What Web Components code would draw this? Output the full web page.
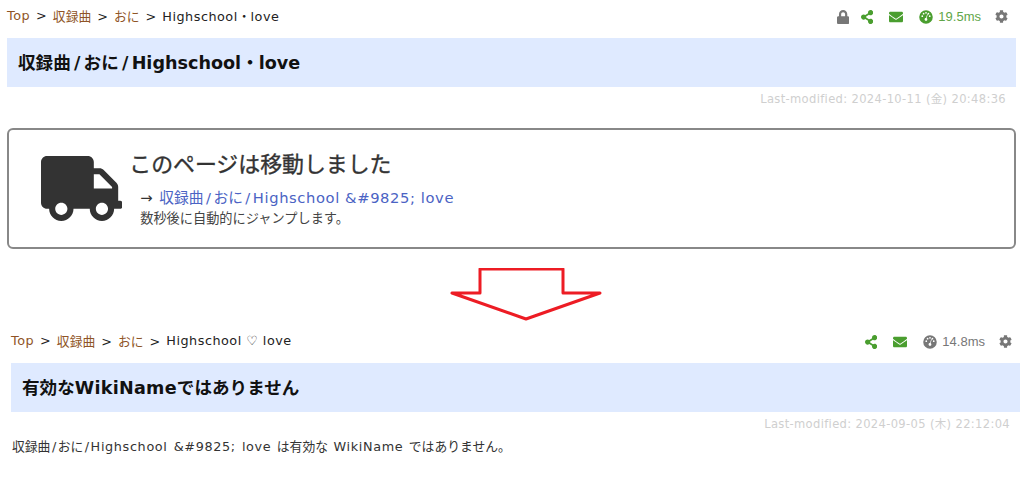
<!DOCTYPE html>
<html lang="ja">
<head>
<meta charset="utf-8">
<title>Highschool love</title>
<style>
  html, body { margin: 0; background: #fff; }
  body {
    height: 482px;
    overflow: hidden;
    font-family: "DejaVu Sans", "Noto Sans CJK JP", sans-serif;
    font-size: 12.8px;
    color: #222;
  }
  .first { margin-left: 7px; }
  .second { margin-left: 11px; }
  .ms { font-family: "Liberation Sans", sans-serif; font-size: 13px; margin: 0 14px 0 5px; }
  /* latin runs are set a little wider than the japanese around them */
  .l { letter-spacing: .5px; }
  .l-m { letter-spacing: .6px; }
  .l-b { letter-spacing: .65px; }
  .l-h { letter-spacing: .25px; }
  .sl { margin: 0 3.2px; }
  .sl-m { margin: 0 2.5px; }
  .sl-s { margin: 0 1.5px; }
</style>
</head>
<body>
<wiki-page class="first">
  <wiki-topbar slot="top">
    <wiki-crumb href><span class="l">Top</span></wiki-crumb>
    <wiki-crumb href>収録曲</wiki-crumb>
    <wiki-crumb href>おに</wiki-crumb>
    <wiki-crumb><span class="l">Highschool</span>・<span class="l">love</span></wiki-crumb>
    <fa-icon slot="tools" name="lock" color="#777" style="margin-right:12px"></fa-icon>
    <fa-icon slot="tools" name="share" color="#4a9e2f" style="margin-right:16px"></fa-icon>
    <fa-icon slot="tools" name="envelope" color="#4a9e2f" style="margin-right:16px"></fa-icon>
    <fa-icon slot="tools" name="gauge" color="#4a9e2f"></fa-icon>
    <span slot="tools" class="ms" style="color:#5fa648">19.5ms</span>
    <fa-icon slot="tools" name="cog" size="13" color="#777"></fa-icon>
  </wiki-topbar>
  <wiki-title>収録曲<span class="sl">/</span>おに<span class="sl">/</span>Highschool・love</wiki-title>
  <wiki-modified>Last-modified: 2024-10-11 (金) 20:48:36</wiki-modified>
  <redirect-notice>
    <span slot="heading">このページは移動しました</span>
    <span slot="target">収録曲<span class="sl-m">/</span>おに<span class="sl-m">/</span><span class="l-m">Highschool &amp;#9825; love</span></span>
    <span slot="note">数秒後に自動的にジャンプします。</span>
  </redirect-notice>
</wiki-page>
<down-arrow></down-arrow>
<wiki-page class="second">
  <wiki-topbar slot="top">
    <wiki-crumb href><span class="l">Top</span></wiki-crumb>
    <wiki-crumb href>収録曲</wiki-crumb>
    <wiki-crumb href>おに</wiki-crumb>
    <wiki-crumb><span class="l">Highschool ♡ love</span></wiki-crumb>
    <fa-icon slot="tools" name="share" color="#4a9e2f" style="margin-right:16px"></fa-icon>
    <fa-icon slot="tools" name="envelope" color="#4a9e2f" style="margin-right:16px"></fa-icon>
    <fa-icon slot="tools" name="gauge" color="#777"></fa-icon>
    <span slot="tools" class="ms" style="color:#777">14.8ms</span>
    <fa-icon slot="tools" name="cog" size="13" color="#777"></fa-icon>
  </wiki-topbar>
  <wiki-title>有効な<span class="l-h">WikiName</span>ではありません</wiki-title>
  <wiki-modified>Last-modified: 2024-09-05 (木) 22:12:04</wiki-modified>
  <wiki-body>収録曲<span class="sl-s">/</span>おに<span class="sl-s">/</span><span class="l-b">Highschool &amp;#9825; love</span> は有効な <span class="l-b">WikiName</span> ではありません。</wiki-body>
</wiki-page>

<script>
const ICONS = {
  lock: ['0 0 448 512', 'M400 224h-24v-72C376 68.2 307.8 0 224 0S72 68.2 72 152v72H48c-26.5 0-48 21.5-48 48v192c0 26.5 21.5 48 48 48h352c26.5 0 48-21.5 48-48V272c0-26.5-21.5-48-48-48zm-104 0H152v-72c0-39.7 32.3-72 72-72s72 32.3 72 72v72z'],
  share: ['0 0 448 512', 'M352 320c-22.608 0-43.387 7.819-59.79 20.895l-102.486-64.054a96.551 96.551 0 0 0 0-41.683l102.486-64.054C308.613 184.181 329.392 192 352 192c53.019 0 96-42.981 96-96S405.019 0 352 0s-96 42.981-96 96c0 7.158.79 14.13 2.276 20.841L155.79 180.895C139.387 167.819 118.608 160 96 160c-53.019 0-96 42.981-96 96s42.981 96 96 96c22.608 0 43.387-7.819 59.79-20.895l102.486 64.054A96.301 96.301 0 0 0 256 416c0 53.019 42.981 96 96 96s96-42.981 96-96-42.981-96-96-96z'],
  envelope: ['0 0 512 512', 'M502.3 190.8c3.9-3.1 9.7-.2 9.7 4.7V400c0 26.5-21.5 48-48 48H48c-26.5 0-48-21.5-48-48V195.6c0-5 5.7-7.8 9.7-4.7 22.4 17.4 52.1 39.5 154.1 113.6 21.1 15.4 56.7 47.8 92.2 47.6 35.7.3 72-32.8 92.3-47.6 102-74.1 131.6-96.3 154-113.7zM256 320c23.2.4 56.6-29.2 73.4-41.4 132.7-96.3 142.8-104.7 173.4-128.7 5.8-4.5 9.2-11.5 9.2-18.9v-19c0-26.5-21.5-48-48-48H48C21.5 64 0 85.5 0 112v19c0 7.4 3.4 14.3 9.2 18.9 30.6 23.9 40.7 32.4 173.4 128.7 16.8 12.2 50.2 41.8 73.4 41.4z'],
  gauge: ['0 0 512 512', 'M256 8a248 248 0 1 0 0 496 248 248 0 0 0 0-496zm0 64a32 32 0 1 1 0 64 32 32 0 0 1 0-64zM120 256a32 32 0 1 1 0-64 32 32 0 0 1 0 64zm48-88a32 32 0 1 1 0-64 32 32 0 0 1 0 64zm150 6l-38 122c18 12 28 32 26 54-2 18-10 32-22 42h-56c-16-12-26-32-24-54 2-30 24-52 54-56l38-122c4-12 16-18 28-14s18 16 14 28zm26-6a32 32 0 1 1 0-64 32 32 0 0 1 0 64zm48 88a32 32 0 1 1 0-64 32 32 0 0 1 0 64z'],
  cog: ['0 0 512 512', 'M487.4 315.7l-42.6-24.6c4.3-23.2 4.3-47 0-70.2l42.6-24.6c4.9-2.8 7.1-8.6 5.5-14-11.1-35.6-30-67.8-54.7-94.6-3.8-4.1-10-5.1-14.8-2.3L380.8 110c-17.9-15.4-38.5-27.3-60.8-35.1V25.8c0-5.6-3.9-10.5-9.4-11.7-36.7-8.2-74.3-7.8-109.2 0-5.5 1.2-9.4 6.1-9.4 11.7V75c-22.2 7.9-42.8 19.8-60.8 35.1L88.7 85.5c-4.9-2.8-11-1.9-14.8 2.3-24.7 26.7-43.6 58.9-54.7 94.6-1.7 5.4.6 11.2 5.5 14L67.3 221c-4.3 23.2-4.3 47 0 70.2l-42.6 24.6c-4.9 2.8-7.1 8.6-5.5 14 11.1 35.6 30 67.8 54.7 94.6 3.8 4.1 10 5.1 14.8 2.3l42.6-24.6c17.9 15.4 38.5 27.3 60.8 35.1v49.2c0 5.6 3.9 10.5 9.4 11.7 36.7 8.2 74.3 7.8 109.2 0 5.5-1.2 9.4-6.1 9.4-11.7v-49.2c22.2-7.9 42.8-19.8 60.8-35.1l42.6 24.6c4.9 2.8 11 1.9 14.8-2.3 24.7-26.7 43.6-58.9 54.7-94.6 1.5-5.5-.7-11.3-5.6-14.1zM256 336c-44.1 0-80-35.9-80-80s35.9-80 80-80 80 35.9 80 80-35.9 80-80 80z'],
  truck: ['0 0 640 512', 'M624 352h-16V243.9c0-12.7-5.1-24.9-14.1-33.9L494 110.1c-9-9-21.2-14.1-33.9-14.1H416V48c0-26.5-21.5-48-48-48H48C21.5 0 0 21.5 0 48v320c0 26.5 21.5 48 48 48h16c0 53 43 96 96 96s96-43 96-96h128c0 53 43 96 96 96s96-43 96-96h48c8.8 0 16-7.2 16-16v-32c0-8.8-7.2-16-16-16zM160 464c-26.5 0-48-21.5-48-48s21.5-48 48-48 48 21.5 48 48-21.5 48-48 48zm320 0c-26.5 0-48-21.5-48-48s21.5-48 48-48 48 21.5 48 48-21.5 48-48 48zm80-208H416V144h44.1l99.9 99.9V256z']
};

class FaIcon extends HTMLElement {
  connectedCallback() {
    const [box, d] = ICONS[this.getAttribute('name')];
    const w = box.split(' ')[2] / 512;
    const size = +this.getAttribute('size') || 14;
    this.attachShadow({ mode: 'open' }).innerHTML = `
      <style>
        :host { display: inline-flex; align-items: center; }
        svg { display: block; fill: ${this.getAttribute('color') || 'currentColor'}; }
      </style>
      <svg xmlns="http://www.w3.org/2000/svg" viewBox="${box}" width="${size * w}" height="${size}"><path fill-rule="evenodd" d="${d}"/></svg>`;
  }
}

class WikiPage extends HTMLElement {
  constructor() {
    super();
    this.attachShadow({ mode: 'open' }).innerHTML = `
      <style>:host { display: block; width: 1009px; }</style>
      <slot name="top"></slot><slot></slot>`;
  }
}

class WikiTopbar extends HTMLElement {
  constructor() {
    super();
    this.attachShadow({ mode: 'open' }).innerHTML = `
      <style>
        :host { display: flex; justify-content: space-between; align-items: center; height: 33px; padding-bottom: 5px; }
        .crumbs { display: flex; align-items: center; margin-bottom: 2px; }
        .tools { display: flex; align-items: center; padding-right: 8px; }
      </style>
      <div class="crumbs"><slot></slot></div>
      <div class="tools"><slot name="tools"></slot></div>`;
  }
}

class WikiCrumb extends HTMLElement {
  constructor() {
    super();
    this.attachShadow({ mode: 'open' }).innerHTML = `
      <style>
        :host { display: block; }
        :host([href]) { color: #8f5426; }
        :host([href])::after { content: '>'; color: #222; margin: 0 6px; }
      </style>
      <slot></slot>`;
  }
}

class WikiTitle extends HTMLElement {
  constructor() {
    super();
    this.attachShadow({ mode: 'open' }).innerHTML = `
      <style>
        :host { display: block; height: 48px; line-height: 48px; padding: 1px 0 0 11px; background: #dfeaff; color: #111; font-size: 17.6px; font-weight: bold; }
      </style>
      <slot></slot>`;
  }
}

class WikiModified extends HTMLElement {
  constructor() {
    super();
    this.attachShadow({ mode: 'open' }).innerHTML = `
      <style>
        :host { display: block; height: 22px; padding: 4px 10px 0 0; text-align: right; font-size: 11.52px; letter-spacing: .35px; line-height: 17px; color: #cfcfcf; }
      </style>
      <slot></slot>`;
  }
}

class RedirectNotice extends HTMLElement {
  constructor() {
    super();
    this.attachShadow({ mode: 'open' }).innerHTML = `
      <style>
        :host { display: flex; align-items: flex-start; margin-top: 15px; height: 121px; box-sizing: border-box; padding: 26px 0 0 32px; border: 2px solid #888; border-radius: 6px; }
        .text { margin-left: 7px; margin-top: -3px; }
        .heading { font-size: 21.9px; -webkit-text-stroke: .35px #333; line-height: 24px; color: #333; }
        .target { margin: 11px 0 0 11px; font-size: 14.72px; line-height: 20px; color: #333; }
        .target span { color: #4b63c4; margin-left: 2px; }
        .note { margin: 2px 0 0 11px; font-size: 13.2px; line-height: 18px; color: #444; }
      </style>
      <fa-icon name="truck" size="65" color="#333"></fa-icon>
      <div class="text">
        <div class="heading"><slot name="heading"></slot></div>
        <div class="target">→ <span><slot name="target"></slot></span></div>
        <div class="note"><slot name="note"></slot></div>
      </div>`;
  }
}

class DownArrow extends HTMLElement {
  constructor() {
    super();
    this.attachShadow({ mode: 'open' }).innerHTML = `
      <style>
        :host { display: block; height: 76px; padding-top: 19px; box-sizing: border-box; }
        svg { display: block; margin-left: 450px; }
      </style>
      <svg xmlns="http://www.w3.org/2000/svg" width="152" height="54" viewBox="0 0 152 54">
        <path d="M2 25H30V1H113V25H150L76 51Z" fill="none" stroke="#ed1c24" stroke-width="3" stroke-linejoin="round"/>
      </svg>`;
  }
}

class WikiBody extends HTMLElement {
  constructor() {
    super();
    this.attachShadow({ mode: 'open' }).innerHTML = `
      <style>:host { display: block; margin-top: -1px; padding-left: 1px; line-height: 20px; color: #333; word-spacing: 1.4px; }</style>
      <slot></slot>`;
  }
}

customElements.define('fa-icon', FaIcon);
customElements.define('wiki-page', WikiPage);
customElements.define('wiki-topbar', WikiTopbar);
customElements.define('wiki-crumb', WikiCrumb);
customElements.define('wiki-title', WikiTitle);
customElements.define('wiki-modified', WikiModified);
customElements.define('redirect-notice', RedirectNotice);
customElements.define('down-arrow', DownArrow);
customElements.define('wiki-body', WikiBody);
</script>
</body>
</html>
